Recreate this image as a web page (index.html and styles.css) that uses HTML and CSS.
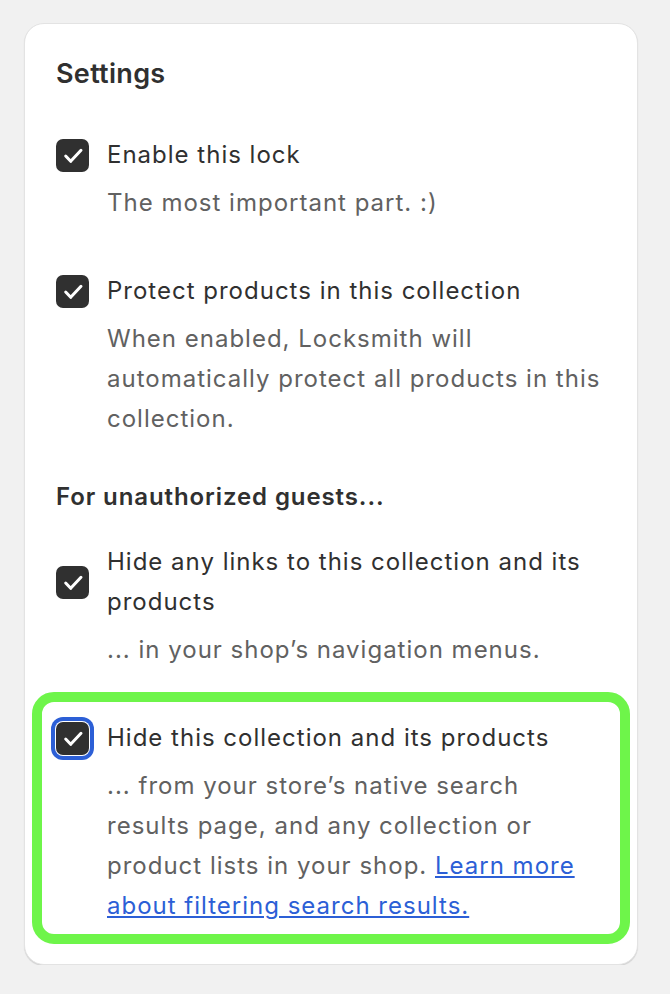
FILE: index.html
```html
<!DOCTYPE html>
<html lang="en">
<head>
<meta charset="utf-8">
<title>Settings</title>
<link rel="stylesheet" href="styles.css">
</head>
<body>
<section class="card">
  <h2 class="title">Settings</h2>

  <div class="item">
    <label class="row">
      <span class="box"><svg viewBox="0 0 32 32" width="32" height="32"><path d="M8.7 17 L13.7 22.3 L24 11.3" /></svg></span>
      <span class="label">Enable this lock</span>
    </label>
    <p class="desc">The most important part. :)</p>
  </div>

  <div class="item">
    <label class="row">
      <span class="box"><svg viewBox="0 0 32 32" width="32" height="32"><path d="M8.7 17 L13.7 22.3 L24 11.3" /></svg></span>
      <span class="label">Protect products in this collection</span>
    </label>
    <p class="desc">When enabled, Locksmith will automatically protect all products in this collection.</p>
  </div>

  <h3 class="subhead">For unauthorized guests...</h3>

  <div class="item">
    <label class="row">
      <span class="box"><svg viewBox="0 0 32 32" width="32" height="32"><path d="M8.7 17 L13.7 22.3 L24 11.3" /></svg></span>
      <span class="label">Hide any links to this collection and its products</span>
    </label>
    <p class="desc">... in your shop’s navigation menus.</p>
  </div>

  <div class="item highlight">
    <label class="row">
      <span class="box focused"><svg viewBox="0 0 32 32" width="32" height="32"><path d="M8.7 17 L13.7 22.3 L24 11.3" /></svg></span>
      <span class="label">Hide this collection and its products</span>
    </label>
    <p class="desc">... from your store’s native search results page, and any collection or product lists in your shop. <a href="#" class="link">Learn more about filtering search results.</a></p>
  </div>
</section>
</body>
</html>
```

FILE: styles.css
```css
* { box-sizing: border-box; }

html, body {
  margin: 0;
  padding: 0;
  background: #f1f1f1;
}

body {
  font-family: "Inter", "Noto Sans", sans-serif;
  color: #303030;
  padding: 23px 32px 0 24px;
}

.card {
  background: #ffffff;
  border: 1px solid #e3e3e3;
  border-radius: 20px;
  box-shadow: 0 1px 1px rgba(0, 0, 0, 0.13);
  padding: 30px 31px 20px 31px;
}

.title {
  margin: 0 0 41px;
  font-size: 27px;
  line-height: 40px;
  font-weight: 600;
  letter-spacing: 0.3px;
  color: #303030;
}

.item {
  margin-bottom: 48px;
}

.row {
  display: flex;
  align-items: center;
  gap: 18px;
}

.box {
  flex: none;
  width: 33px;
  height: 33px;
  border-radius: 7px;
  background: #303030;
  display: flex;
  align-items: center;
  justify-content: center;
}

.box svg path {
  fill: none;
  stroke: #ffffff;
  stroke-width: 3;
  stroke-linecap: round;
  stroke-linejoin: round;
}

.box.focused {
  box-shadow: 0 0 0 1px #ffffff, 0 0 0 5px #2c5fd6;
}

.label {
  font-size: 24px;
  line-height: 40px;
  letter-spacing: 1px;
  color: #303030;
}

.desc {
  margin: 8px 0 0 51px;
  font-size: 24px;
  line-height: 40px;
  letter-spacing: 1px;
  color: #616161;
}

.subhead {
  margin: -10px 0 25px;
  font-size: 24px;
  line-height: 40px;
  font-weight: 600;
  letter-spacing: 0.9px;
  color: #303030;
}

.highlight {
  margin: -26px -24px 0;
  padding: 16px 14px 8px;
  border: 10px solid #6ef54a;
  border-radius: 22px;
}

.link {
  color: #2c5fd6;
  text-decoration: underline;
  text-underline-offset: 2px;
}
```
